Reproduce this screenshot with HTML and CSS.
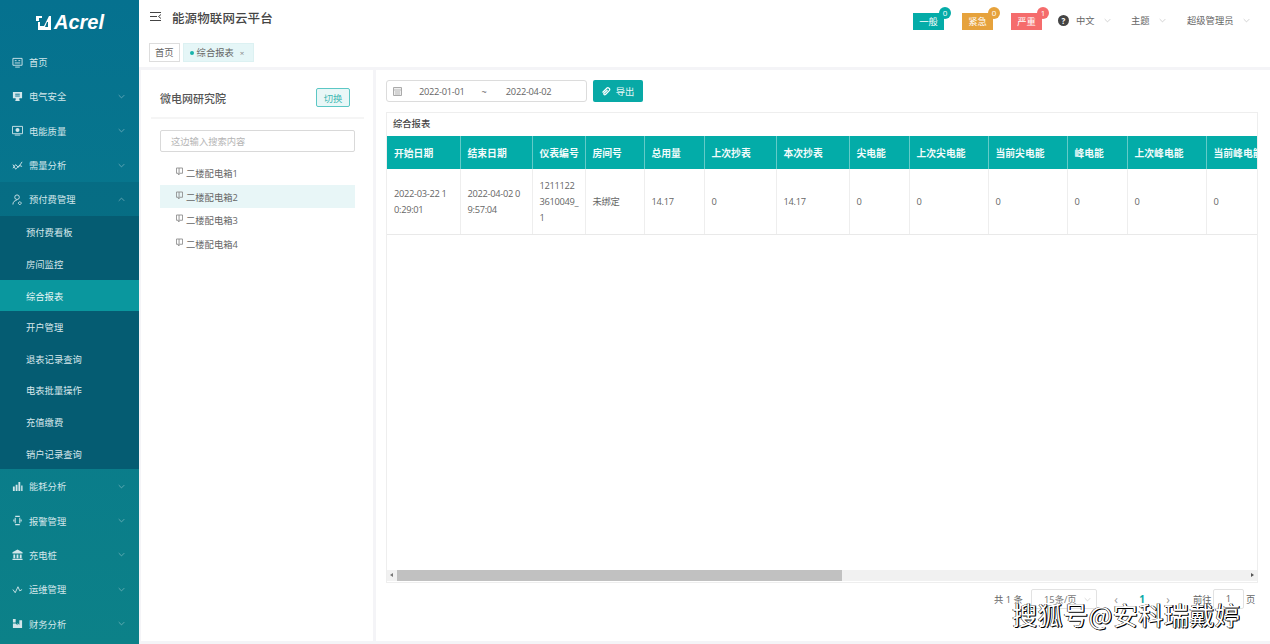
FILE: index.html
```html
<!DOCTYPE html>
<html lang="zh-CN">
<head>
<meta charset="utf-8">
<title>能源物联网云平台</title>
<link rel="stylesheet" href="styles.css">
</head>
<body>
<svg class="defs" width="0" height="0">
  <symbol id="chev" viewBox="0 0 10 6"><path d="M1 1l4 4 4-4" fill="none" stroke="currentColor" stroke-width="1"/></symbol>
  <symbol id="book" viewBox="0 0 8 9"><path d="M.5.5h7v6h-3.500M3.500.5v8M3.500 8.500l-1-1V6.500h-2v-6" fill="none" stroke="#8a8a8a" stroke-width="1"/></symbol>
</svg>
<div class="app">
  <aside class="side">
    <div class="logo">
      <svg class="logo-mark" width="15" height="15" viewBox="0 0 15 15"><path d="M0 1h6v2H3v3H0zM2 7h2v4h4l5-10h2v14H2zM11 7l-2 5h3V7z" fill="#fff" fill-rule="evenodd"/></svg>
      <span class="logo-text">Acrel</span>
    </div>
    <nav class="menu">
      <a class="item"><svg class="ico" viewBox="0 0 12 12"><path d="M1 1.500h10v7.500H1zM3.500 11h5M3 4h2M7 4h2M3 6.500h6" fill="none" stroke="currentColor"/></svg><span>首页</span></a>
      <a class="item"><svg class="ico" viewBox="0 0 12 12"><path d="M1 1h10v7H8v2l1 1H3l1-1V8H1z" fill="currentColor"/><path d="M3.500 3.500h5M3.500 5.500h5" stroke="#06728f"/></svg><span>电气安全</span><svg class="chev"><use href="#chev"/></svg></a>
      <a class="item"><svg class="ico" viewBox="0 0 12 12"><path d="M.5 1.500h11v8H.5zM3 11h6" fill="none" stroke="currentColor"/><circle cx="6" cy="5.500" r="2.200" fill="currentColor"/></svg><span>电能质量</span><svg class="chev"><use href="#chev"/></svg></a>
      <a class="item"><svg class="ico" viewBox="0 0 12 12"><path d="M1 9l3-4 3 3 4-6M1 5l3 5 4-4 3 1" fill="none" stroke="currentColor"/></svg><span>需量分析</span><svg class="chev"><use href="#chev"/></svg></a>
      <a class="item open"><svg class="ico" viewBox="0 0 12 12"><circle cx="5.500" cy="3.500" r="2.500" fill="none" stroke="currentColor"/><path d="M1 11.500c0-3 2-4.500 4-4.500M8.500 8.500a1.500 1.500 0 1 0 .01 0" fill="none" stroke="currentColor"/></svg><span>预付费管理</span><svg class="chev up"><use href="#chev"/></svg></a>
      <div class="sub">
        <a class="sub-item">预付费看板</a>
        <a class="sub-item">房间监控</a>
        <a class="sub-item on">综合报表</a>
        <a class="sub-item">开户管理</a>
        <a class="sub-item">退表记录查询</a>
        <a class="sub-item">电表批量操作</a>
        <a class="sub-item">充值缴费</a>
        <a class="sub-item">销户记录查询</a>
      </div>
      <a class="item"><svg class="ico" viewBox="0 0 12 12"><path d="M1 6h2v5H1zM4 4h2v7H4zM7 1h2v10H7zM10 5h1.500v6H10z" fill="currentColor"/></svg><span>能耗分析</span><svg class="chev"><use href="#chev"/></svg></a>
      <a class="item"><svg class="ico" viewBox="0 0 12 12"><path d="M3.500 1.500h5M3.500 10.500h5M3.500 3v6M8.500 3v6M2 5v2M10 5v2" fill="none" stroke="currentColor" stroke-width="1.100"/></svg><span>报警管理</span><svg class="chev"><use href="#chev"/></svg></a>
      <a class="item"><svg class="ico" viewBox="0 0 12 12"><path d="M6 .5L11.500 3.500V5H.5V3.500zM1.500 6h2v4h-2zM5 6h2v4H5zM8.500 6h2v4h-2zM.5 10.500h11V12H.5z" fill="currentColor"/></svg><span>充电桩</span><svg class="chev"><use href="#chev"/></svg></a>
      <a class="item"><svg class="ico" viewBox="0 0 12 12"><path d="M1 6l2.500 3.500L6.500 3l2 4.500L11 6" fill="none" stroke="currentColor"/></svg><span>运维管理</span><svg class="chev"><use href="#chev"/></svg></a>
      <a class="item"><svg class="ico" viewBox="0 0 12 12"><path d="M1 1h3v4H1zM1 6h3l2 2V5.500l2 2V2.500h3V11H1z" fill="currentColor"/></svg><span>财务分析</span><svg class="chev"><use href="#chev"/></svg></a>
    </nav>
  </aside>

  <div class="main">
    <header class="top">
      <svg class="burger" width="11" height="10" viewBox="0 0 11 10"><path d="M0 .5h11M0 4.500h7M0 8.500h11M11 2.500L8.500 4.500 11 6.500" fill="none" stroke="#444" stroke-width="1"/></svg>
      <h1 class="brand">能源物联网云平台</h1>
      <div class="top-right">
        <span class="alarm teal">一般<i class="dot">0</i></span>
        <span class="alarm amber">紧急<i class="dot">0</i></span>
        <span class="alarm red">严重<i class="dot">1</i></span>
        <span class="help">?</span>
        <span class="drop lang">中文<svg class="chev"><use href="#chev"/></svg></span>
        <span class="drop theme">主题<svg class="chev"><use href="#chev"/></svg></span>
        <span class="drop user">超级管理员<svg class="chev"><use href="#chev"/></svg></span>
      </div>
    </header>
    <div class="tags">
      <span class="tag">首页</span>
      <span class="tag active"><i class="tag-dot"></i>综合报表<i class="tag-x">×</i></span>
    </div>

    <div class="content">
      <section class="left">
        <div class="left-head">
          <span class="org">微电网研究院</span>
          <button class="switch">切换</button>
        </div>
        <div class="left-body">
          <div class="search">这边输入搜索内容</div>
          <ul class="tree">
            <li><svg class="book"><use href="#book"/></svg>二楼配电箱1</li>
            <li class="sel"><svg class="book"><use href="#book"/></svg>二楼配电箱2</li>
            <li><svg class="book"><use href="#book"/></svg>二楼配电箱3</li>
            <li><svg class="book"><use href="#book"/></svg>二楼配电箱4</li>
          </ul>
        </div>
      </section>

      <section class="right">
        <div class="tools">
          <div class="range">
            <svg class="cal" width="9" height="9" viewBox="0 0 9 9"><path d="M.5.5h8v8h-8z" fill="#eee" stroke="#aaa"/><path d="M1 3h7M2 5h5M2 7h5" stroke="#bbb"/></svg>
            <span class="d1">2022-01-01</span><span class="til">~</span><span class="d2">2022-04-02</span>
          </div>
          <button class="export"><svg width="9" height="9" viewBox="0 0 9 9"><path d="M.5 5.500L5 1c1-1 3.500 1 2.500 2.300L3.500 7.500c-1 .8-2.200-.3-1.500-1.300L5.500 3" fill="none" stroke="#fff" stroke-width="1.200"/></svg>导出</button>
        </div>
        <div class="card">
          <div class="card-title">综合报表</div>
          <div class="grid-wrap">
            <table class="grid">
              <colgroup>
                <col class="c73"><col class="c72"><col class="c53"><col class="c59"><col class="c60"><col class="c72"><col class="c73"><col class="c60"><col class="c79"><col class="c79"><col class="c60"><col class="c79"><col class="c79">
              </colgroup>
              <thead>
                <tr><th>开始日期</th><th>结束日期</th><th>仪表编号</th><th>房间号</th><th>总用量</th><th>上次抄表</th><th>本次抄表</th><th>尖电能</th><th>上次尖电能</th><th>当前尖电能</th><th>峰电能</th><th>上次峰电能</th><th>当前峰电能</th></tr>
              </thead>
              <tbody>
                <tr><td>2022-03-22 1<br>0:29:01</td><td>2022-04-02 0<br>9:57:04</td><td>1211122<br>3610049_<br>1</td><td>未绑定</td><td>14.17</td><td>0</td><td>14.17</td><td>0</td><td>0</td><td>0</td><td>0</td><td>0</td><td>0</td></tr>
              </tbody>
            </table>
          </div>
          <div class="hscroll">
            <span class="arrow al"></span>
            <span class="thumb"></span>
            <span class="arrow ar"></span>
          </div>
        </div>
        <div class="pager">
          <span class="total">共 1 条</span>
          <span class="size">15条/页<svg class="chev"><use href="#chev"/></svg></span>
          <span class="pg prev">‹</span>
          <span class="pg cur">1</span>
          <span class="pg next">›</span>
          <span class="goto">前往</span>
          <span class="jump">1</span>
          <span class="unit">页</span>
        </div>
      </section>
    </div>
  </div>
</div>
<div class="mark">搜狐号@安科瑞戴婷</div>
</body>
</html>
```
FILE: styles.css
```css
* { box-sizing: border-box; }
html, body { margin: 0; height: 100%; }
body {
  width: 1270px; height: 644px; overflow: hidden; position: relative;
  font-family: "Open Sans", "Noto Sans CJK SC", sans-serif;
  font-size: 9.300px; color: #555; background: #fff;
}
.defs { position: absolute; }
.app { display: flex; height: 644px; }

/* sidebar */
.side {
  width: 139px; flex: none; height: 644px; color: #d2e6ea;
  background: linear-gradient(180deg, #05718f 0%, #0c8188 100%);
}
.logo { height: 45px; display: flex; align-items: center; padding: 0 0 0 36px; gap: 3px; }
.logo-mark { margin-top: -1px; }
.logo-text {
  font: italic 700 20px/1 "Liberation Sans", sans-serif; color: #fff; margin-top: -2px;
}
.menu { display: flex; flex-direction: column; }
.item { height: 34.300px; display: flex; align-items: center; padding: 0 14px 0 12px; gap: 5px; }
.item.open { background: rgba(0, 60, 80, .14); }
.ico { width: 11px; height: 11px; flex: none; margin-right: 1px; color: #d2e6ea; }
.chev { width: 7px; height: 5px; margin-left: auto; color: currentColor; opacity: .6; }
.chev.up { transform: rotate(180deg); }
.sub { background: #055c72; display: flex; flex-direction: column; }
.sub-item { height: 31.600px; line-height: 33px; padding-left: 26px; color: #d8e8ec; }
.sub-item.on { background: #0a979e; color: #e8f6f6; }

/* top */
.main { flex: 1; min-width: 0; display: flex; flex-direction: column; }
.top { height: 38px; display: flex; align-items: center; padding: 0 0 4px 11px; }
.burger { flex: none; margin-right: 11px; }
.brand { margin: 0; font-size: 12.500px; font-weight: 500; color: #444; letter-spacing: .1px; }
.top-right { margin-left: auto; display: flex; align-items: center; height: 100%; }
.alarm {
  position: relative; width: 31px; height: 17px; line-height: 17px; text-align: center;
  color: #fff; margin-right: 18px; margin-top: 8px;
}
.teal { background: #04aca8; }
.amber { background: #e6a23c; }
.red { background: #f56c6c; }
.dot {
  position: absolute; top: -6px; right: -7px; width: 12px; height: 12px; border-radius: 50%;
  font: normal 8px/12px "Open Sans", sans-serif; color: #fff; background: inherit; text-align: center;
}
.help {
  width: 11px; height: 11px; border-radius: 50%; background: #444; color: #fff; margin: 6px 7px 0 -2px;
  font: 700 8px/11px "Open Sans", sans-serif; text-align: center;
}
.drop { display: flex; align-items: center; margin-top: 6px; color: #666; }
.drop .chev { margin-left: 9px; opacity: .45; color: #777; }
.lang { width: 55px; }
.theme { width: 56px; }
.user { width: 83px; }

.tags { height: 29px; padding: 5px 0 0 10px; display: flex; gap: 3px; align-items: flex-start; }
.tag { height: 19px; line-height: 17px; padding: 0 5px; border: 1px solid #ddd; color: #666; white-space: nowrap; }
.tag.active { width: 71px; background: #e5f6f7; border-color: #dcf1f2; display: flex; align-items: center; }
.tag-dot { width: 4px; height: 4px; border-radius: 50%; background: #17b3ab; margin: 1px 3px 0 1px; flex: none; }
.tag-x { font-style: normal; font-size: 8px; margin-left: 6px; color: #888; }

/* content */
.content {
  flex: 1; min-height: 0; display: flex; gap: 3px; background: #f4f4f7;
  padding: 3px 0 3px 2px; border-top: 0;
}
.left { width: 232px; flex: none; background: #fff; }
.left-head {
  height: 49px; margin: 0 9px 0 10px; padding: 8px 14px 0 9px; display: flex; align-items: center;
  justify-content: space-between; border-bottom: 2px solid #f5f5f5;
}
.org { font-size: 11px; font-weight: 500; color: #555; }
.switch {
  width: 34px; height: 19px; padding: 0; border: 1px solid #5cc7c5; border-radius: 2px; background: #e9f7f7;
  color: #3fb7b3; font: 9.300px "Open Sans", "Noto Sans CJK SC", sans-serif;
}
.left-body { padding: 11px 18px 0 19px; }
.search {
  height: 22px; line-height: 21px; padding-left: 10px; border: 1px solid #d9d9d9; border-radius: 2px; color: #b5b5b5;
}
.tree { list-style: none; margin: 9px 0 0; padding: 0; }
.tree li { height: 23.500px; padding: 1px 0 0 16px; display: flex; align-items: center; color: #666; }
.tree li.sel { background: #e8f6f7; }
.book { width: 7px; height: 9px; margin: -3px 3px 0 0; flex: none; }

.right { flex: 1; min-width: 0; background: #fff; padding: 10px 12px 0 10px; }
.tools { display: flex; gap: 6px; height: 22px; }
.range {
  width: 201px; height: 22px; border: 1px solid #dcdcdc; border-radius: 3px; display: flex; align-items: center;
  padding-left: 6px; color: #666;
}
.d1, .d2 { letter-spacing: -.3px; }
.d1 { margin-left: 17px; }
.til { margin-left: 17px; }
.d2 { margin-left: 19px; }
.export {
  width: 50px; height: 22px; border: 0; border-radius: 2px; background: #08a9a6; color: #e8f8f8; padding: 0;
  display: flex; align-items: center; justify-content: center; gap: 5px;
  font: 9.300px "Open Sans", "Noto Sans CJK SC", sans-serif;
}
.card { margin-top: 10px; width: 872px; height: 471px; border: 1px solid #eeeeee; display: flex; flex-direction: column; }
.card-title { height: 23px; line-height: 22px; padding-left: 6px; color: #444; font-weight: 500; flex: none; }
.grid-wrap { flex: 1; min-height: 0; overflow: hidden; }
.grid { table-layout: fixed; width: 898px; border-collapse: collapse; }
.c53 { width: 53px; } .c59 { width: 59px; } .c60 { width: 60px; }
.c72 { width: 72px; } .c73 { width: 73px; } .c79 { width: 79px; }
.grid th {
  height: 33px; background: #03aca8; color: #f2fbfb; font-size: 9.800px; font-weight: 700; text-align: left; padding: 0 0 0 7px;
  border-right: 1px solid #63cbc8; white-space: nowrap; overflow: hidden;
}
.grid td {
  height: 65px; padding: 1px 0 0 7px; color: #666; line-height: 16px; white-space: nowrap; letter-spacing: -.3px;
  border-right: 1px solid #eee; border-bottom: 1px solid #e9e9e9;
}
.hscroll { height: 11px; flex: none; background: #f1f1f1; display: flex; align-items: center; position: relative; margin-bottom: 1px; }
.thumb { position: absolute; left: 10px; width: 445px; top: 0; height: 11px; background: #c1c1c1; }
.arrow { position: absolute; top: 3px; width: 0; height: 0; border-top: 2.500px solid transparent; border-bottom: 2.500px solid transparent; }
.al { left: 3px; border-right: 3px solid #777; }
.ar { right: 3px; border-left: 3px solid #555; }

.pager { display: flex; align-items: center; height: 20px; margin-top: 6px; padding-left: 608px; color: #666; }
.total { width: 37px; white-space: nowrap; }
.size {
  width: 66px; height: 20px; border: 1px solid #e2e2e2; border-radius: 2px; display: flex; align-items: center;
  padding: 0 5px 0 12px; color: #777; white-space: nowrap;
}
.size .chev { color: #aaa; }
.pg { width: 26px; text-align: center; font-size: 12px; color: #999; }
.prev { margin-left: 6px; }
.cur { font-size: 10px; font-weight: 700; color: #08a9a6; }
.goto { margin-left: 12px; width: 20px; white-space: nowrap; }
.jump { width: 31px; height: 20px; border: 1px solid #e2e2e2; border-radius: 2px; text-align: center; line-height: 18px; }
.unit { margin-left: 2px; }

/* reposted-image watermark over the page */
.mark {
  position: absolute; left: 1012px; top: 599px; font-size: 25px; line-height: 30px; white-space: nowrap;
  font-family: "Noto Sans CJK SC", sans-serif; color: #fff; letter-spacing: .5px;
  text-shadow: 1px 1px 0 #000, -.5px -.5px 0 #000, 1px 0 0 #000;
}
```
